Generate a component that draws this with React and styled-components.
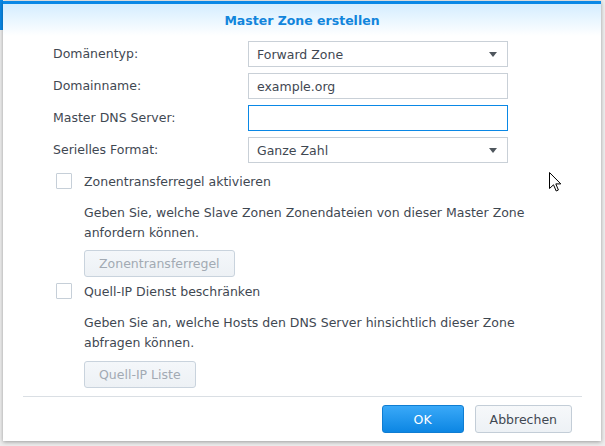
import React from 'react';
import styled, { createGlobalStyle } from 'styled-components';

const GlobalStyle = createGlobalStyle`
  html, body {
    margin: 0;
    padding: 0;
  }
  body {
    font-family: "DejaVu Sans", "Liberation Sans", sans-serif;
    font-size: 12.5px;
    color: #3f4852;
  }
`;

const Page = styled.div`
  position: relative;
  width: 605px;
  height: 446px;
  overflow: hidden;
  padding: 1px 0 0 3px;
  box-sizing: border-box;
  background:
    linear-gradient(#0a88e6, #0a88e6) 0 0 / 3px 30px no-repeat,
    #ededed;
`;

const Dialog = styled.div`
  width: 598px;
  height: 440px;
  box-sizing: border-box;
  background: #fff;
  border-top: 3px solid #0a88e6;
  box-shadow: 0 1px 4px rgba(0, 0, 0, 0.35);
  display: flex;
  flex-direction: column;
`;

const Header = styled.div`
  height: 32px;
  display: flex;
  align-items: center;
  justify-content: center;
  background: linear-gradient(#d4edff, #ffffff);
`;

const Title = styled.h1`
  margin: 0;
  font-size: 12.5px;
  font-weight: bold;
  color: #1285dc;
`;

const Body = styled.div`
  padding: 5px 0 0 50px;
`;

const FormGrid = styled.div`
  display: grid;
  grid-template-columns: 195px 260px;
  row-gap: 6px;
  align-items: center;
`;

const Label = styled.label`
  line-height: 26px;
`;

const Field = styled.div`
  height: 26px;
  box-sizing: border-box;
  border: 1px solid ${({ $focused }) => ($focused ? '#0a88e6' : '#c9d0d7')};
  background: #fff;
  padding: 0 8px;
  display: flex;
  align-items: center;
  justify-content: space-between;
`;

const Caret = styled.span`
  width: 0;
  height: 0;
  margin-right: 2px;
  border-left: 4.5px solid transparent;
  border-right: 4.5px solid transparent;
  border-top: 5px solid #4f565d;
`;

const CheckRow = styled.div`
  display: flex;
  align-items: center;
  height: 24px;
  margin-top: ${({ $top }) => $top}px;
  padding-left: 3px;
`;

const Box = styled.span`
  width: 16px;
  height: 16px;
  box-sizing: border-box;
  border: 1px solid #c6cfd8;
  border-radius: 1px;
  background: #fff;
`;

const CheckLabel = styled.span`
  margin-left: 12px;
`;

const Hint = styled.p`
  margin: 10px 0 0 31px;
  width: 465px;
  line-height: 20px;
`;

const ActionButton = styled.button`
  display: block;
  margin: ${({ $top }) => $top}px 0 0 31px;
  height: 27px;
  padding: 0 14px;
  font: inherit;
  color: #a2aab3;
  background: linear-gradient(#f4f7fa, #edf1f5);
  border: 1px solid #c9d3dd;
  border-radius: 3px;
`;

const Separator = styled.hr`
  margin: 8px 19px 0 20px;
  border: 0;
  border-top: 1px solid #dadfe4;
`;

const Footer = styled.div`
  display: flex;
  justify-content: flex-end;
  gap: 11px;
  padding: 8px 29px 8px 0;
`;

const FooterButton = styled.button`
  height: 28px;
  min-width: 82px;
  padding: 0 14px;
  font: inherit;
  border-radius: 3px;
  color: ${({ $primary }) => ($primary ? '#ffffff' : '#3f4852')};
  background: ${({ $primary }) =>
    $primary ? 'linear-gradient(#3aa9f8, #0c86e3)' : 'linear-gradient(#f6f8fa, #edf1f5)'};
  border: 1px solid ${({ $primary }) => ($primary ? '#0f7dd2' : '#c3cdd7')};
`;

const Cursor = styled.svg`
  position: absolute;
  left: 549px;
  top: 172px;
`;

const fields = [
  { label: 'Domänentyp:', value: 'Forward Zone', select: true },
  { label: 'Domainname:', value: 'example.org' },
  { label: 'Master DNS Server:', value: '', focused: true },
  { label: 'Serielles Format:', value: 'Ganze Zahl', select: true },
];

export default function App() {
  return (
    <>
      <GlobalStyle />
      <Page>
        <Dialog>
          <Header>
            <Title>Master Zone erstellen</Title>
          </Header>
          <Body>
            <FormGrid>
              {fields.map((f) => (
                <React.Fragment key={f.label}>
                  <Label>{f.label}</Label>
                  <Field $focused={f.focused}>
                    <span>{f.value}</span>
                    {f.select && <Caret />}
                  </Field>
                </React.Fragment>
              ))}
            </FormGrid>

            <CheckRow $top={6}>
              <Box />
              <CheckLabel>Zonentransferregel aktivieren</CheckLabel>
            </CheckRow>
            <Hint>
              Geben Sie, welche Slave Zonen Zonendateien von dieser Master Zone anfordern können.
            </Hint>
            <ActionButton $top={7} disabled>Zonentransferregel</ActionButton>

            <CheckRow $top={2}>
              <Box />
              <CheckLabel>Quell-IP Dienst beschränken</CheckLabel>
            </CheckRow>
            <Hint>
              Geben Sie an, welche Hosts den DNS Server hinsichtlich dieser Zone abfragen können.
            </Hint>
            <ActionButton $top={8} disabled>Quell-IP Liste</ActionButton>
          </Body>
          <Separator />
          <Footer>
            <FooterButton $primary>OK</FooterButton>
            <FooterButton>Abbrechen</FooterButton>
          </Footer>
        </Dialog>
        <Cursor width="13" height="21" viewBox="0 0 13 21">
          <path
            d="M0.5 0.5 L0.5 16.5 L4.5 12.8 L7.2 19 L9.4 18 L6.8 11.9 L11.8 11.9 Z"
            fill="#fff"
            stroke="#000"
            strokeWidth="1"
            strokeLinejoin="miter"
          />
        </Cursor>
      </Page>
    </>
  );
}
